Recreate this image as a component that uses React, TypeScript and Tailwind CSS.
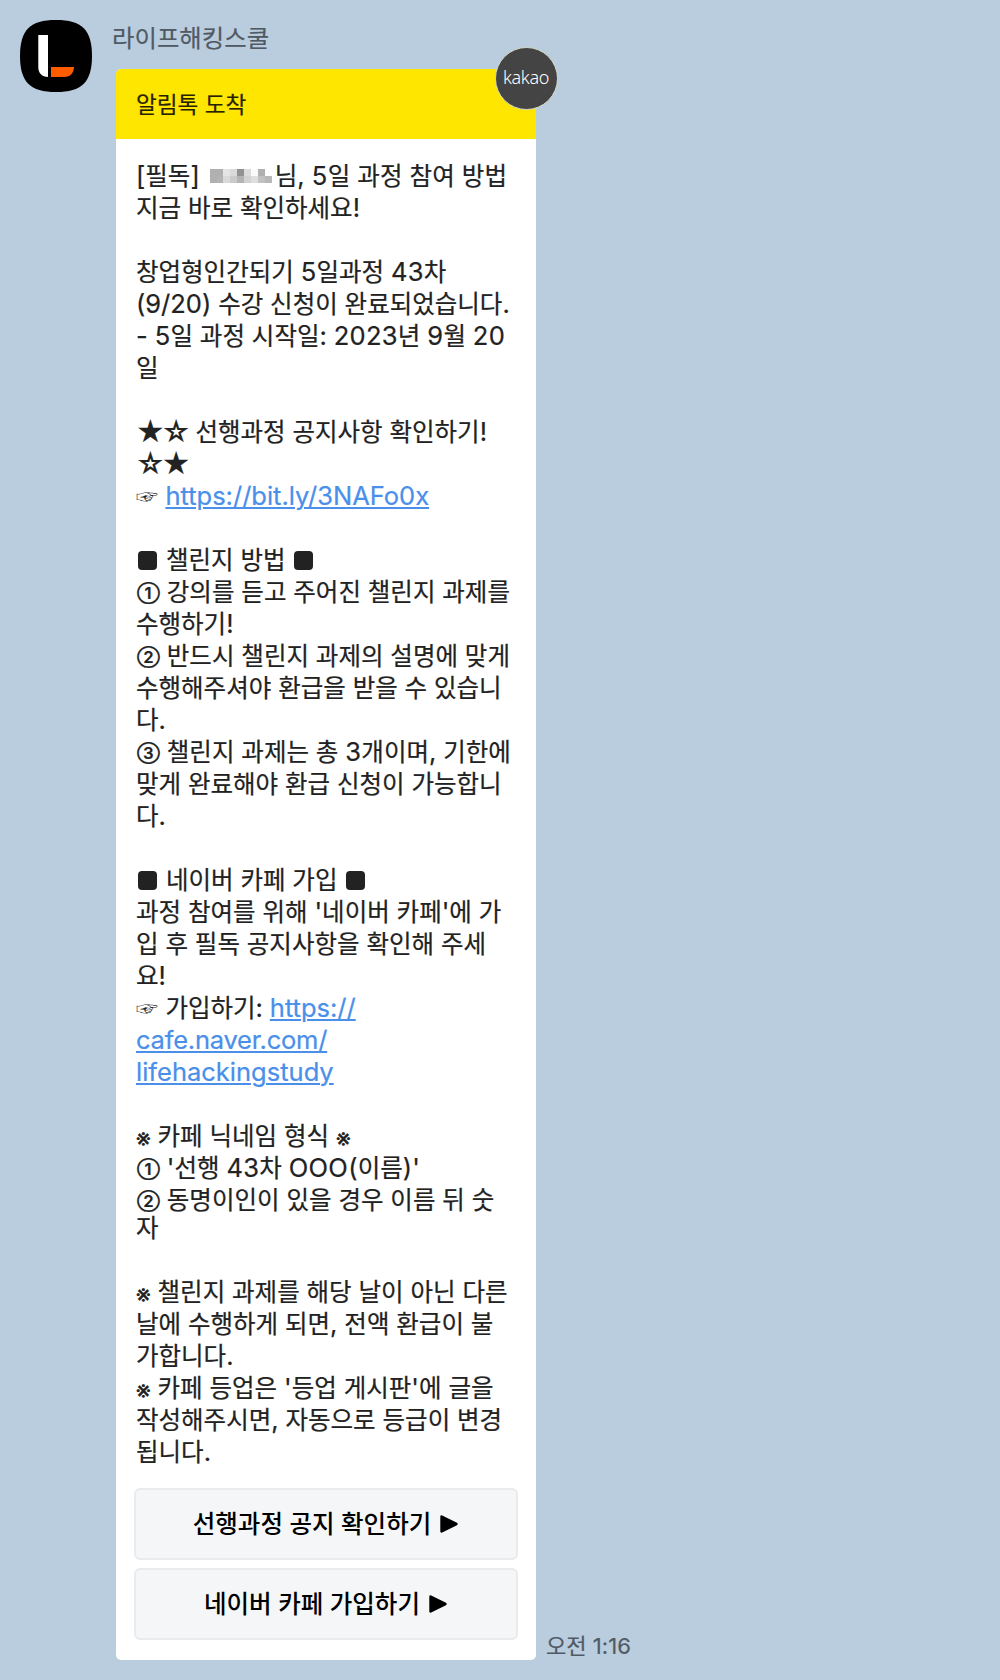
import React from 'react';
import clsx from 'clsx';

type Piece = { text: string; link?: boolean; tight?: boolean };
type Line = (string | Piece)[];

const link = (text: string, tight = false): Piece => ({ text, link: true, tight });

// One entry per rendered line, an empty entry is a blank line
const INTRO: Line[] = [
  ['지금 바로 확인하세요!'],
  [],
  ['창업형인간되기 5일과정 43차'],
  ['(9/20) 수강 신청이 완료되었습니다.'],
  ['- 5일 과정 시작일: 2023년 9월 20'],
  ['일'],
  [],
  ['★☆ 선행과정 공지사항 확인하기!'],
  ['☆★'],
  ['☞ ', link('https://bit.ly/3NAFo0x')],
  [],
  ['■ 챌린지 방법 ■'],
  ['① 강의를 듣고 주어진 챌린지 과제를'],
  ['수행하기!'],
  ['② 반드시 챌린지 과제의 설명에 맞게'],
  ['수행해주셔야 환급을 받을 수 있습니'],
  ['다.'],
  ['③ 챌린지 과제는 총 3개이며, 기한에'],
  ['맞게 완료해야 환급 신청이 가능합니'],
  ['다.'],
  [],
  ['■ 네이버 카페 가입 ■'],
  ["과정 참여를 위해 '네이버 카페'에 가"],
  ['입 후 필독 공지사항을 확인해 주세'],
  ['요!'],
  ['☞ 가입하기: ', link('https://')],
  [link('cafe.naver.com/', true)],
  [link('lifehackingstudy')],
  [],
  ['※ 카페 닉네임 형식 ※'],
  ["① '선행 43차 OOO(이름)'"],
  ['② 동명이인이 있을 경우 이름 뒤 숫'],
];

const NOTES: Line[] = [
  ['자'],
  [],
  ['※ 챌린지 과제를 해당 날이 아닌 다른'],
  ['날에 수행하게 되면, 전액 환급이 불'],
  ['가합니다.'],
  ["※ 카페 등업은 '등업 게시판'에 글을"],
  ['작성해주시면, 자동으로 등급이 변경'],
  ['됩니다.'],
];

const BUTTONS = ['선행과정 공지 확인하기', '네이버 카페 가입하기'];

// Pixelated name, two rows of nine blocks
const MOSAIC = [
  '#b0b0b0', '#b0b0b0', '#e4e4e4', '#dadada', '#929292', '#dcdcdc', '#fafafa', '#b0b0b0', '#ffffff',
  '#b0b0b0', '#b4b4b4', '#dadada', '#cacaca', '#b4b4b4', '#d2d2d2', '#dedede', '#c2c2c2', '#b8b8b8',
];

function Glyphs({ text }: { text: string }) {
  const runs = text.match(/[①②③]|[★☆]+|■|☞|※|[\x21-\x7e]+|[^①②③★☆■☞※\x21-\x7e]+/g) ?? [];
  return (
    <>
      {runs.map((run, i) => {
        if (/[①②③]/.test(run)) return <span key={i} className="relative -top-[2px] ml-[1px] text-[16.5px] leading-none font-semibold">{run}</span>;
        if (/[★☆]/.test(run)) return <span key={i} className="relative top-[1px] mr-[1px] text-[27.5px] leading-none tracking-[-3px]">{run}</span>;
        if (run === '■') return <span key={i} className="relative -top-[4.5px] mr-[2px] ml-[2px] inline-flex size-[19px] items-center justify-center rounded-[4px] bg-[#222] align-baseline text-[12px] leading-none text-transparent">{run}</span>;
        if (run === '☞') return <span key={i} className="inline-block w-[22.5px] origin-center scale-y-75 text-[22px] leading-none [-webkit-text-stroke:0]">{run}</span>;
        if (run === '※') return <span key={i} className="relative top-[1.5px] -mr-[0.5px] ml-[-0.5px] leading-none">{run}</span>;
        if (/^[\x21-\x7e]/.test(run)) return <span key={i} className={clsx('text-[25.5px] leading-none', /^(\d+|O+\()$/.test(run) && 'tracking-[0.3px]')}>{run}</span>;
        return <span key={i} className="leading-none">{run}</span>;
      })}
    </>
  );
}

function TextLine({ line }: { line: Line }) {
  return (
    <div className="h-8">
      {line.map((p, i) =>
        typeof p === 'string' ? (
          <Glyphs key={i} text={p} />
        ) : (
          <a key={i} className={clsx('text-[25.5px] leading-none text-[#4a8fe9] underline decoration-2 underline-offset-[2px]', p.tight && 'tracking-[-0.22px]')}>{p.text}</a>
        )
      )}
    </div>
  );
}

function Avatar() {
  return (
    <svg viewBox="0 0 72 72" className="size-[72px] shrink-0">
      <path d="M36 0C62 0 72 10 72 36S62 72 36 72 0 62 0 36 10 0 36 0Z" fill="#000" />
      <path d="M18.3 15H28V57C22 57 18.3 53 18.3 47.5Z" fill="#fff" />
      <path d="M31 47H54C54 53 50 57 44.5 57H31Z" fill="#ff5c00" />
    </svg>
  );
}

function ActionButton({ label }: { label: string }) {
  return (
    <button className="flex h-[72px] w-[384px] items-center justify-center rounded-[6px] border-2 border-[#e9ebed] bg-[#f5f6f8] pr-[1px] text-[24.5px] font-medium text-black">
      <span>{label}</span>
      <svg viewBox="0 0 18 18" className="ml-[9px] size-[18px]">
        <path d="M1.6 1.6L16.4 9L1.6 16.4Z" fill="#000" stroke="#000" strokeWidth="2.6" strokeLinejoin="round" />
      </svg>
    </button>
  );
}

export default function App() {
  return (
    <div className="flex h-[1680px] w-[1000px] items-start bg-[#bacddf] pt-5 pl-5 font-[Inter,'Noto_Sans_CJK_KR',sans-serif]">
      <Avatar />
      <div className="ml-5 flex flex-col">
        <div className="h-[49px] text-[24.4px] leading-[36px] text-[#505a64] [-webkit-text-stroke:0.2px]">라이프해킹스쿨</div>
        <div className="ml-1 flex items-end">
          <div className="relative h-[1591px] w-[420px] rounded-[5px] bg-white">
            <div className="flex h-[70px] items-center rounded-tl-[5px] bg-[#ffe600] pt-[2px] pl-5 text-[22.6px] text-[#262200] [-webkit-text-stroke:0.2px]">알림톡 도착</div>
            <div className="absolute -top-[22px] left-[378.5px] flex size-[63px] items-center justify-center rounded-full border border-[#d8dcc8] bg-[#444] pb-[2px] font-['Noto_Sans'] text-[18px] font-light tracking-[-0.35px] text-white">kakao</div>

            <div className="pt-[21px] pl-5 text-[24.5px] leading-8 whitespace-pre text-[#222] [-webkit-text-stroke:0.22px]">
              <div className="flex h-8">
                <div><Glyphs text="[필독]" /></div>
                <div className="mt-[9px] ml-[10px] grid h-[14px] w-[62px] grid-cols-9">
                  {MOSAIC.map((c, i) => <span key={i} style={{ background: c }} />)}
                </div>
                <div className="ml-[3px] tracking-[0.1px]"><Glyphs text="님, 5일 과정 참여 방법" /></div>
              </div>
              {INTRO.map((line, i) => <TextLine key={i} line={line} />)}
              <div className="-mt-1">
                {NOTES.map((line, i) => <TextLine key={i} line={line} />)}
              </div>
            </div>

            <div className="mt-[20px] ml-[18px] flex flex-col gap-2">
              {BUTTONS.map((label) => <ActionButton key={label} label={label} />)}
            </div>
          </div>
          <span className="ml-[10px] text-[22.1px] leading-[28px] text-[#505a64] [-webkit-text-stroke:0.2px]">오전 1:16</span>
        </div>
      </div>
    </div>
  );
}
